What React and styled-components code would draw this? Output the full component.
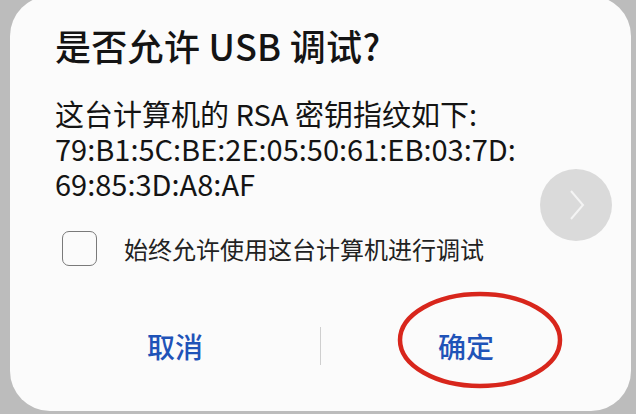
import styled, { createGlobalStyle } from "styled-components";

// USB 调试确认对话框

const GlobalStyle = createGlobalStyle`
  html, body {
    margin: 0;
    padding: 0;
    background: #bcbcbc;
    overflow: hidden;
  }
  body {
    font-family: "Noto Sans CJK SC", "Noto Sans", sans-serif;
    color: #141414;
  }
`;

const Page = styled.div`
  width: 636px;
  height: 414px;
  overflow: hidden;
`;

const Card = styled.div`
  position: relative;
  box-sizing: border-box;
  margin-left: 10px;
  margin-top: -4px;
  width: 621px;
  height: 415px;
  background: #fbfbfb;
  border-radius: 40px;
  padding: 27px 45px 0;
  display: flex;
  flex-direction: column;
`;

const Title = styled.h1`
  margin: 0;
  font-size: 36px;
  line-height: 44px;
  font-weight: 500;
  letter-spacing: 0.3px;
`;

const Message = styled.div`
  margin-top: 29px;
  font-size: 29px;
  font-weight: 400;
`;

const Line = styled.div`
  height: 35px;
  line-height: 35px;
  white-space: nowrap;
`;

const CheckRow = styled.label`
  margin-top: 27px;
  height: 40px;
  display: flex;
  align-items: center;
  gap: 27px;
  font-size: 24px;
  color: #222;
`;

const Box = styled.span`
  margin-left: 7px;
  width: 33px;
  height: 33px;
  border: 1.6px solid #7a7a7a;
  border-radius: 7px;
  flex-shrink: 0;
`;

const Actions = styled.div`
  margin: 48px -25px 0;
  height: 60px;
  display: flex;
  align-items: center;
`;

const ActionButton = styled.button`
  flex: 1;
  height: 60px;
  border: 0;
  background: transparent;
  font-family: inherit;
  font-size: 28px;
  font-weight: 500;
  color: #1f53b8;
  padding: 0;
`;

const Divider = styled.span`
  width: 1px;
  height: 38px;
  background: #cfcfcf;
`;

// 悬浮的灰色圆形按钮
const FloatBall = styled.div`
  position: absolute;
  left: 530px;
  top: 173px;
  width: 72px;
  height: 72px;
  border-radius: 50%;
  background: #dadada;
  display: flex;
  align-items: center;
  justify-content: center;
`;

// 红色圈注
const Ring = styled.svg`
  position: absolute;
  left: 386px;
  top: 294px;
  pointer-events: none;
`;

function App() {
  return (
    <Page>
      <GlobalStyle />
      <Card>
        <Title>是否允许 USB 调试?</Title>
        <Message>
          <Line>这台计算机的 RSA 密钥指纹如下:</Line>
          <Line>79:B1:5C:BE:2E:05:50:61:EB:03:7D:</Line>
          <Line>69:85:3D:A8:AF</Line>
        </Message>
        <CheckRow>
          <Box />
          始终允许使用这台计算机进行调试
        </CheckRow>
        <Actions>
          <ActionButton>取消</ActionButton>
          <Divider />
          <ActionButton>确定</ActionButton>
        </Actions>
        <FloatBall>
          <svg width="24" height="36" viewBox="0 0 24 36">
            <path d="M7 4 L19 18 L7 32" fill="none" stroke="#f4f4f4" strokeWidth="2" />
          </svg>
        </FloatBall>
        <Ring width="168" height="100" viewBox="0 0 168 100">
          <ellipse cx="84" cy="50" rx="80" ry="46" fill="none" stroke="#d8261c" strokeWidth="4.5" />
        </Ring>
      </Card>
    </Page>
  );
}

export default App;
